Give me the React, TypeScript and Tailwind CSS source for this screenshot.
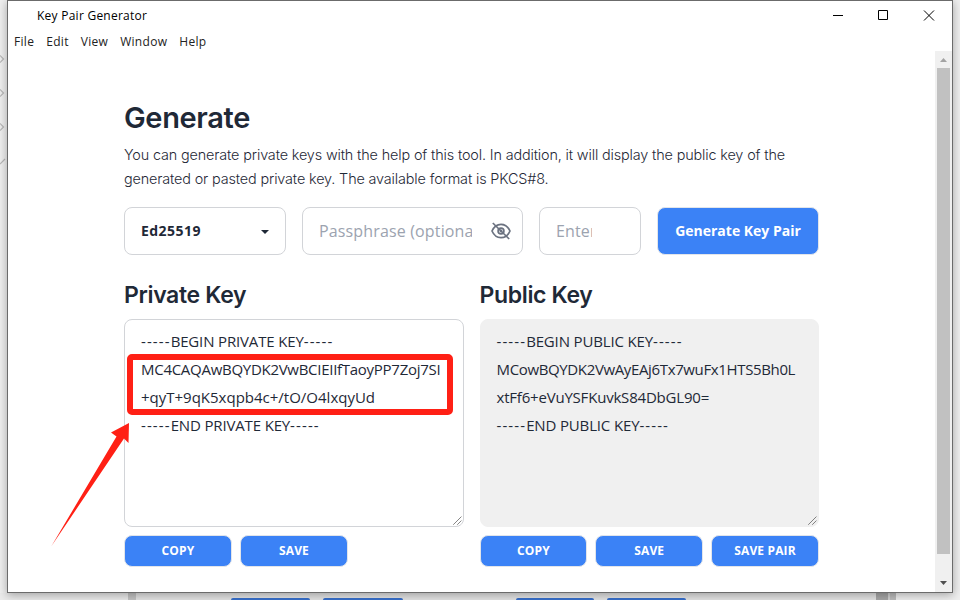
import React from "react";

const ui = "font-['Open_Sans','Noto_Sans',sans-serif]";

function Field({ text, clip, width, children }: { text: string; clip: string; width: string; children?: React.ReactNode }) {
  return (
    <div className={`flex h-12 shrink-0 items-center justify-between rounded-lg border border-[#d2d4d8] pl-4 pr-[11px] ${width}`}>
      <span className={`overflow-hidden whitespace-nowrap text-[16px] leading-6 tracking-[0.15px] text-[#9ca3af] ${ui} ${clip}`}>{text}</span>
      {children}
    </div>
  );
}

function Action({ label, width }: { label: string; width: string }) {
  return (
    <button className={`h-8 shrink-0 rounded-lg border border-[#e2e5ea] bg-[#3b82f6] pb-px text-[12px] font-bold tracking-[0.15px] text-white ${ui} ${width}`}>
      {label}
    </button>
  );
}

function Marker({ label }: { label: string }) {
  return (
    <div>
      <span className="tracking-[1.1px]">-----</span>
      <span className="tracking-[-0.15px]">{label}</span>
      <span className="tracking-[1.1px]">-----</span>
    </div>
  );
}

function Grip() {
  return (
    <svg className="absolute bottom-px right-px h-[9px] w-[9px]" viewBox="0 0 9 9" stroke="#444" strokeWidth="1" strokeDasharray="1.1 0.3">
      <path d="M0.5 8.5L8.5 0.5M4.5 8.5L8.5 4.5" />
    </svg>
  );
}

export default function App() {
  return (
    <div className="relative h-[600px] w-[960px] overflow-hidden bg-[#efefef]">
      <div className="absolute inset-0">
        <svg className="absolute left-0 top-0" width="7" height="180" fill="none" stroke="#b8b8b8" strokeWidth="1.2">
          <path d="M0 55.5L3.5 59L0 62.5M0 89.5L3.5 93L0 96.5M0 123.5L3.5 127L0 130.5M0 164L5 159" />
        </svg>
        <div className="absolute bottom-0 left-0 flex h-[7px] w-[960px] items-end">
          <div className="h-full w-[128px] bg-[#ebebeb]" />
          <div className="h-full w-[8px] bg-[#c4c4c4]" />
          <div className="flex h-full w-[740px] items-end bg-[#e4e4e4] pl-[95px]">
            <div className="h-[2px] w-[79px] rounded-t-sm bg-[#3870cc]" />
            <div className="ml-[13px] h-[2px] w-[80px] rounded-t-sm bg-[#3870cc]" />
            <div className="ml-[113px] h-[2px] w-[78px] rounded-t-sm bg-[#3870cc]" />
            <div className="ml-[13px] h-[2px] w-[79px] rounded-t-sm bg-[#3870cc]" />
          </div>
          <div className="h-full w-[12px] bg-[#a8a8a8]" />
          <div className="h-full w-[2px] bg-[#d3d3d3]" />
          <div className="h-full w-[6px] bg-[#bcbcbc]" />
        </div>
      </div>

      <div className="relative ml-[7px] flex h-[593px] w-[946px] flex-col border border-[#6b6b6b] bg-white shadow-[0_2px_9px_rgba(0,0,0,0.32)]">
        <header className="flex h-[29px] shrink-0 items-center justify-between pl-[29px]">
          <h1 className={`text-[12px] tracking-[0.25px] text-black ${ui}`}>Key Pair Generator</h1>
          <svg width="120" height="28" viewBox="0 0 120 28" fill="none" stroke="#000" strokeWidth="1">
            <path d="M1 13.5H11" />
            <path d="M46.5 8.5H55.5V17.5H46.5Z" />
            <path d="M92 8.5L102 18.5M102 8.5L92 18.5" />
          </svg>
        </header>
        <nav className={`flex h-[21px] shrink-0 items-center gap-3 pl-[6px] pt-[2px] text-[12px] tracking-[0.3px] text-[#222] ${ui}`}>
          <span>File</span>
          <span>Edit</span>
          <span>View</span>
          <span>Window</span>
          <span>Help</span>
        </nav>

        <div className="flex min-h-0 flex-1">
          <main className="flex flex-1 flex-col pl-[116px] pt-[49px] text-[#1f2937]">
            <h2 className="h-9 font-['Inter',sans-serif] text-[29px] font-semibold leading-9 tracking-[-0.35px]">Generate</h2>
            <p className="mt-[7px] h-12 whitespace-nowrap font-['Inter',sans-serif] text-[14.4px] font-light leading-6 tracking-[-0.14px]">
              You can generate private keys with the help of this tool. In addition, it will display the public key of the
              <br />
              generated or pasted private key. The available format is PKCS#8.
            </p>

            <div className="mt-4 flex gap-4">
              <div className={`flex h-12 w-[162px] shrink-0 items-center justify-between rounded-lg border border-[#d2d4d8] pl-4 pr-[16.5px] text-[14px] font-bold tracking-[0.45px] ${ui}`}>
                <span className="pb-0.5">Ed25519</span>
                <svg width="8" height="4" viewBox="0 0 8 4" className="mt-0.5">
                  <path d="M0 0H8L4 4Z" fill="#1f2937" />
                </svg>
              </div>
              <Field text="Passphrase (optional)" clip="w-[153px]" width="w-[221px]">
                <svg width="20" height="18" viewBox="0 0 20 18" fill="none" stroke="#6b7280" strokeWidth="1.7">
                  <path d="M1 9C3 4.5 6.2 2.3 10 2.3S17 4.5 19 9C17 13.5 13.8 15.7 10 15.7S3 13.5 1 9Z" />
                  <circle cx="10" cy="9" r="2.9" />
                  <circle cx="10" cy="9" r="0.6" />
                  <path d="M1.8 1L18.2 17" />
                </svg>
              </Field>
              <Field text="Enter key" clip="w-[36px]" width="w-[102px]" />
              <button className={`h-12 w-[162px] shrink-0 rounded-lg border border-[#e2e5ea] bg-[#3b82f6] pb-0.5 text-[14px] font-bold text-white ${ui}`}>
                Generate Key Pair
              </button>
            </div>

            <div className="mt-[24px] flex gap-[15.5px]">
              <section className="w-[340px] shrink-0">
                <h3 className="h-8 font-['Inter',sans-serif] text-[23px] font-semibold leading-8 tracking-[-0.35px]">Private Key</h3>
                <div className={`relative mt-2 h-[208px] whitespace-nowrap rounded-lg border border-[#d2d4d8] pl-4 pt-[7px] text-[15px] leading-7 ${ui}`}>
                  <Marker label="BEGIN PRIVATE KEY" />
                  <div className="tracking-[-0.28px]">MC4CAQAwBQYDK2VwBCIEIIfTaoyPP7Zoj7SI</div>
                  <div>+qyT+9qK5xqpb4c+/tO/O4lxqyUd</div>
                  <Marker label="END PRIVATE KEY" />
                  <Grip />
                  <div className="absolute left-[2px] top-[34px] h-[61px] w-[326px] rounded-[5px] border-[6px] border-[#ff2015]" />
                </div>
                <div className="mt-2 flex gap-2">
                  <Action label="COPY" width="w-[108px]" />
                  <Action label="SAVE" width="w-[108px]" />
                </div>
              </section>
              <section className="w-[339.5px] shrink-0">
                <h3 className="h-8 font-['Inter',sans-serif] text-[23px] font-semibold leading-8 tracking-[-0.35px]">Public Key</h3>
                <div className={`relative mt-2 h-[208px] whitespace-nowrap rounded-lg border border-[#f0f0f0] bg-[#f0f0f0] pl-4 pt-[7px] text-[15px] leading-7 ${ui}`}>
                  <Marker label="BEGIN PUBLIC KEY" />
                  <div className="tracking-[-0.36px]">MCowBQYDK2VwAyEAj6Tx7wuFx1HTS5Bh0L</div>
                  <div className="tracking-[-0.2px]">xtFf6+eVuYSFKuvkS84DbGL90=</div>
                  <Marker label="END PUBLIC KEY" />
                  <Grip />
                </div>
                <div className="mt-2 flex gap-2">
                  <Action label="COPY" width="w-[107.8px]" />
                  <Action label="SAVE" width="w-[107.8px]" />
                  <Action label="SAVE PAIR" width="w-[107.8px]" />
                </div>
              </section>
            </div>
          </main>
          <div className="flex w-[17px] shrink-0 flex-col items-center bg-[#f0f0f0]">
            <svg width="17" height="17" className="shrink-0">
              <path d="M5 11H12L8.5 7Z" fill="#a3a3a3" />
            </svg>
            <div className="h-[486px] w-[13px] bg-[#c1c1c1]" />
            <svg width="17" height="17" className="mt-auto shrink-0" viewBox="0 0 17 17">
              <path d="M5 6H12L8.5 10Z" fill="#505050" />
            </svg>
          </div>
        </div>
      </div>

      <svg className="absolute left-[50px] top-[422px]" width="82" height="126" viewBox="0 0 82 126" fill="#ff2015">
        <path d="M1.5 124L66.5 14.5L61 10.5L79 1L78.5 21L74 16.5Z" />
      </svg>
    </div>
  );
}
